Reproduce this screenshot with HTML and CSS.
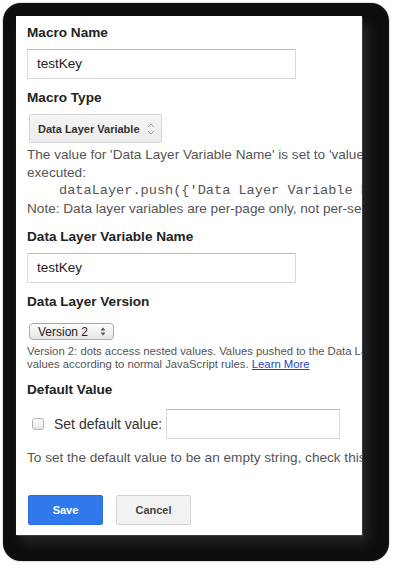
FILE: index.html
```html
<!DOCTYPE html>
<html lang="en">
<head>
    <meta charset="UTF-8">
    <meta name="viewport" content="width=device-width, initial-scale=1.0">
    <title>Macro - Data Layer Variable</title>
    <link rel="stylesheet" href="styles.css">
</head>
<body>
    <div class="frame">
        <div class="panel">
            <div class="label label-first">Macro Name</div>
            <div class="field">testKey</div>

            <div class="label">Macro Type</div>
            <div class="select-type">
                <span>Data Layer Variable</span>
                <svg width="10" height="14" viewBox="0 0 10 14">
                    <path d="M2 5 L5 2 L8 5" fill="none" stroke="#999" stroke-width="1"/>
                    <path d="M2 9 L5 12 L8 9" fill="none" stroke="#999" stroke-width="1"/>
                </svg>
            </div>

            <div class="help">
                <span class="line">The value for 'Data Layer Variable Name' is set to 'value' when the following code is</span>
                <span class="line">executed:</span>
                <span class="line code">dataLayer.push({'Data Layer Variable Name': value});</span>
                <span class="line">Note: Data layer variables are per-page only, not per-session.</span>
            </div>

            <div class="label">Data Layer Variable Name</div>
            <div class="field">testKey</div>

            <div class="label label-version">Data Layer Version</div>
            <div class="select-version">
                <span>Version 2</span>
                <svg width="6" height="9" viewBox="0 0 6 9">
                    <path d="M0.5 3.5 L3 0.5 L5.5 3.5 Z" fill="#555"/>
                    <path d="M0.5 5.5 L3 8.5 L5.5 5.5 Z" fill="#555"/>
                </svg>
            </div>

            <div class="small-help">
                <span class="line">Version 2: dots access nested values. Values pushed to the Data Layer are merged with existing</span>
                <span class="line">values according to normal JavaScript rules. <a href="#">Learn More</a></span>
            </div>

            <div class="label">Default Value</div>
            <div class="default-row">
                <span class="checkbox"></span>
                <span class="default-text">Set default value:</span>
                <div class="field field-short"></div>
            </div>

            <div class="hint">To set the default value to be an empty string, check this box and leave the field blank.</div>

            <div class="actions">
                <button class="btn btn-save">Save</button>
                <button class="btn btn-cancel">Cancel</button>
            </div>
        </div>
    </div>
</body>
</html>
```

FILE: styles.css
```css
* {
    margin: 0;
    padding: 0;
    box-sizing: border-box;
}

body {
    font-family: "Liberation Sans", Arial, sans-serif;
    background: #fff;
    color: #222;
}

.frame {
    margin: 3px;
    width: 386px;
    height: 558px;
    border-radius: 18px;
    background: #0e0e0e;
    padding: 13px 27px 26px 13px;
    box-shadow: 0 0 2px rgba(0, 0, 0, 0.4);
}

.panel {
    width: 346px;
    height: 519px;
    background: #fff;
    overflow: hidden;
    padding: 9px 0 0 11px;
    box-shadow: 1px 1px 0 #3a3a3a, 6px 8px 10px #262626;
}

.label {
    font-size: 13.6px;
    font-weight: bold;
    line-height: 16px;
    color: #222;
    margin-top: 11px;
    white-space: nowrap;
}

.label-first {
    margin-top: 0;
}

.field {
    width: 269px;
    height: 30px;
    margin-top: 8px;
    border: 1px solid #d9d9d9;
    border-top-color: #c0c0c0;
    padding: 0 9px;
    font-size: 13.5px;
    line-height: 28px;
    color: #222;
}

.select-type {
    display: flex;
    align-items: center;
    justify-content: space-between;
    width: 133px;
    height: 29px;
    margin: 8px 0 0 2px;
    padding: 0 5px 0 8px;
    background: linear-gradient(#f5f5f5, #ececec);
    border: 1px solid #d6d6d6;
    border-radius: 2px;
    font-size: 11px;
    font-weight: bold;
    color: #333;
}

.help {
    margin-top: 3px;
    font-size: 13.6px;
    line-height: 18px;
    color: #555;
}

.line {
    display: block;
    white-space: nowrap;
}

.code {
    font-family: "Liberation Mono", "Courier New", monospace;
    font-size: 13.6px;
    padding-left: 32px;
    color: #555;
}

.label-version {
    margin-top: 11px;
}

.select-version {
    display: flex;
    align-items: center;
    justify-content: space-between;
    width: 85px;
    height: 17px;
    margin: 13px 0 0 2px;
    padding: 0 7px 0 8px;
    background: linear-gradient(#fdfdfd, #e6e6e6);
    border: 1px solid #a9a9a9;
    border-radius: 4px;
    font-size: 12px;
    color: #222;
}

.small-help {
    margin-top: 5px;
    font-size: 11.3px;
    line-height: 13px;
    color: #555;
}

.small-help a {
    color: #1a45c8;
}

.default-row {
    display: flex;
    align-items: center;
    margin-top: 11px;
}

.checkbox {
    width: 12px;
    height: 12px;
    margin-left: 5px;
    border: 1px solid #b5b5b5;
    border-radius: 3px;
    background: linear-gradient(#fff, #e4e4e4);
}

.default-text {
    margin-left: 10px;
    font-size: 14px;
    color: #333;
}

.field-short {
    width: 174px;
    margin: 0 0 0 4px;
}

.hint {
    margin-top: 10px;
    font-size: 13.6px;
    line-height: 18px;
    color: #555;
    white-space: nowrap;
}

.actions {
    display: flex;
    gap: 13px;
    margin: 28px 0 0 1px;
}

.btn {
    width: 75px;
    height: 30px;
    border-radius: 2px;
    font-family: "Liberation Sans", Arial, sans-serif;
    font-size: 11px;
    font-weight: bold;
    cursor: pointer;
}

.btn-save {
    background: #3079ed;
    border: 1px solid #2f6fe0;
    color: #fff;
}

.btn-cancel {
    background: #f2f2f2;
    border: 1px solid #d4d4d4;
    color: #444;
}
```
